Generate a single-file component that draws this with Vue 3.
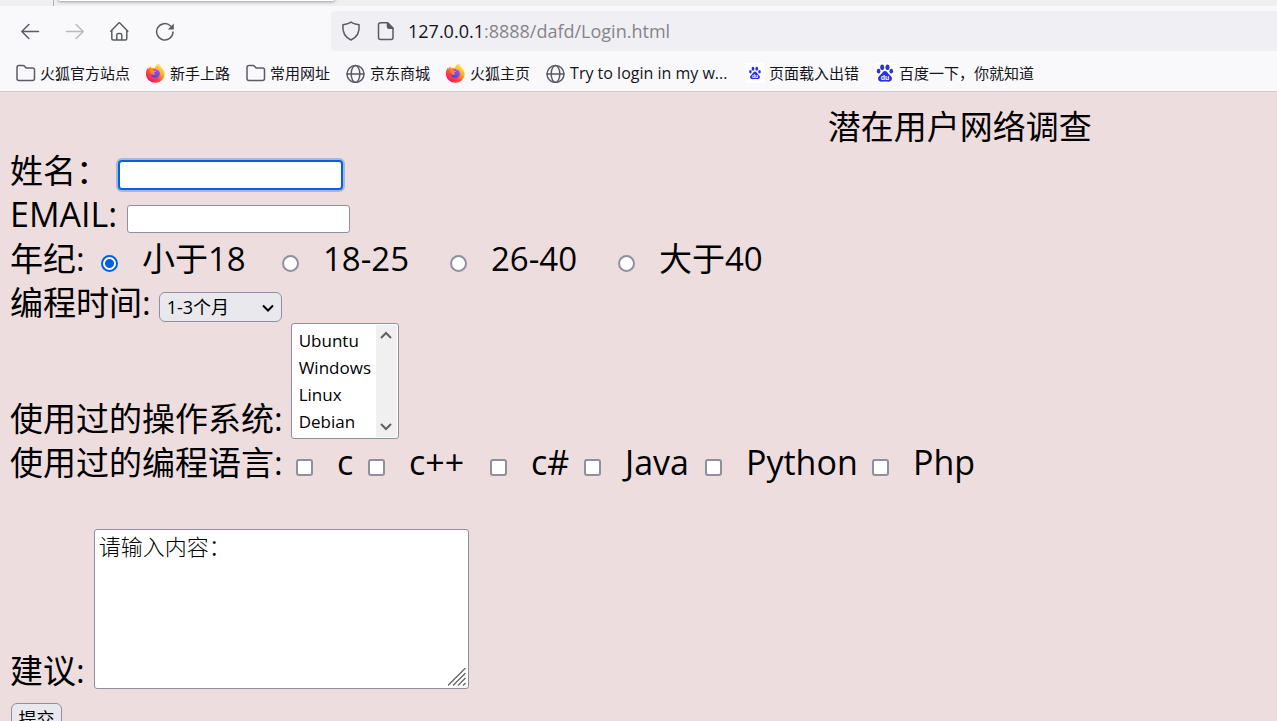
<script setup>
import { ref } from 'vue'

const bookmarks = [
  { icon: 'folder', text: '火狐官方站点' },
  { icon: 'firefox', text: '新手上路' },
  { icon: 'folder', text: '常用网址' },
  { icon: 'globe', text: '京东商城' },
  { icon: 'firefox', text: '火狐主页' },
  { icon: 'globe', text: 'Try to login in my w...', wide: true },
  { icon: 'paw-small', text: '页面载入出错' },
  { icon: 'paw', text: '百度一下，你就知道' }
]
const ages = ['小于18', '18-25', '26-40', '大于40']
const age = ref('小于18')
const languages = ['c', 'c++', 'c#', 'Java', 'Python', 'Php']
const chosen = ref([])
const systems = ['Ubuntu', 'Windows', 'Linux', 'Debian']
const suggestion = ref('请输入内容：')
</script>

<template>
  <div class="browser">
    <svg class="defs" aria-hidden="true">
      <defs>
        <linearGradient id="ffBody" x1="0.85" y1="0.1" x2="0.2" y2="0.95">
          <stop offset="0" stop-color="#fff44f" />
          <stop offset="0.35" stop-color="#ffa52a" />
          <stop offset="0.65" stop-color="#ff4a3c" />
          <stop offset="1" stop-color="#f0136f" />
        </linearGradient>
        <linearGradient id="ffCore" x1="0.7" y1="0" x2="0.3" y2="1">
          <stop offset="0" stop-color="#b14bf4" />
          <stop offset="1" stop-color="#4a46d6" />
        </linearGradient>
      </defs>
    </svg>

    <div class="tabs"><div class="tab-edge"></div><div class="tab"></div></div>

    <header class="chrome">
      <nav class="toolbar">
        <button class="nav" aria-label="后退">
          <svg viewBox="0 0 20 20"><path d="M18.500 10.500H2M8.800 3.500 1.800 10.500l7 7" /></svg>
        </button>
        <button class="nav faded" aria-label="前进">
          <svg viewBox="0 0 20 20"><path d="M1.500 10.500H18M11.200 3.500l7 7-7 7" /></svg>
        </button>
        <button class="nav" aria-label="主页">
          <svg viewBox="0 0 20 20"><path d="M.8 10.300 8.500 2.200q.8-.8 1.600 0L17.800 10.300M1.800 9.200V17.500q0 1.500 1.500 1.500h12q1.500 0 1.500-1.500V9.200M6.800 19V14q0-1.500 1.500-1.500h2q1.500 0 1.500 1.500v5" /></svg>
        </button>
        <button class="nav" aria-label="刷新">
          <svg viewBox="0 0 20 20"><path d="M15.600 5A8.200 8.200 0 1 0 18 11" /><path class="solid tip" d="M18.800 2.500v6h-6z" /></svg>
        </button>
        <div class="address">
          <svg class="glyph" viewBox="0 0 20 20"><path d="M10 1C8 2.700 5 3.300 1.900 3.700 1.300 10.500 3.500 16 10 19c6.500-3 8.700-8.500 8.100-15.300C15 3.300 12 2.700 10 1z" /></svg>
          <svg class="glyph" viewBox="0 0 20 20"><path d="M11.500 1.800H4.500q-2 0-2 2v12.700q0 2 2 2h10.500q2 0 2-2V7.300z" /><path class="solid" d="M11.500 1.800v4q0 1.500 1.500 1.500h4z" /></svg>
          <span class="url">127.0.0.1<span class="path">:8888/dafd/Login.html</span></span>
        </div>
      </nav>

      <nav class="bookmarks">
        <a v-for="b in bookmarks" :key="b.text" href="#" class="bookmark">
          <svg v-if="b.icon === 'folder'" class="icon" viewBox="0 0 20 20"><path d="M1 15.500v-11q0-2 2-2h4q1 0 1.600.8L10 5h6.500q2 0 2 2v8.500q0 2-2 2H3q-2 0-2-2z" /></svg>
          <svg v-else-if="b.icon === 'globe'" class="icon" viewBox="0 0 20 20"><circle cx="9.500" cy="11" r="8.500" /><ellipse cx="9.500" cy="11" rx="4.300" ry="8.500" /><path d="M1 11h17" /></svg>
          <svg v-else-if="b.icon === 'firefox'" class="icon colored" viewBox="0.500 0 20 20">
            <path fill="url(#ffBody)" d="M13.500.5c.7 1.400 1 2.100 2.200 3.500 2 2 3.500 4.400 3.500 7a9.400 8.800 0 0 1-18.800 0c0-2.500.6-4.800 2.200-6.500l.3 1.600L4.800 3l.5 2.200c1.300-.6 2.500-.6 3.800 0 1-2.200 2.300-3.800 4.400-4.700z" />
            <circle cx="9.800" cy="10.500" r="4.600" fill="url(#ffCore)" />
            <path fill="#ff8b24" d="M4.500 6.500c2-.5 3.400.4 4.300 1.300h2c-.2 1.200-1.800 1.300-2.300 2.300l1.200 1.300c-1.700 1-3.700.2-4.700-1.300z" />
            <path fill="#ffbd32" d="M10 3.900c3 .2 5.600 2.400 5.600 5.800-.7-1.600-1.900-2.500-3.200-2.700-1.800-.4-2.500-1.600-2.400-3.100z" />
          </svg>
          <svg v-else class="icon colored" :viewBox="b.icon === 'paw' ? '0 0 20 20' : '-4 -4 28 28'">
            <rect x="-4" y="-4" width="28" height="28" rx="1" fill="#fff" />
            <g fill="#2932e1">
              <ellipse cx="7.200" cy="4.200" rx="2" ry="2.800" /><ellipse cx="12.500" cy="4.200" rx="2" ry="2.800" />
              <ellipse cx="3.600" cy="8.200" rx="1.800" ry="2.400" /><ellipse cx="16.300" cy="8.200" rx="1.800" ry="2.400" />
              <path d="M10 8c2 0 2.700 2.200 4.200 3.600 1.500 1.300 3 2.400 2.700 4.500-.3 2-2 2.800-3.800 2.600-2-.2-4-.2-6.200 0-1.900.2-3.600-.8-3.800-2.700-.2-2 1.200-3.100 2.700-4.400C7.300 10.200 8 8 10 8z" />
            </g>
            <text x="10" y="17" text-anchor="middle" class="du">du</text>
          </svg>
          <span :class="{ wide: b.wide }">{{ b.text }}</span>
        </a>
      </nav>
    </header>

    <main class="page">
      <h1>潜在用户网络调查</h1>
      <form @submit.prevent>
        <div class="row">
          <label for="name">姓名：</label>
          <input id="name" class="text focused" type="text" />
        </div>
        <div class="row">
          <label for="email" class="latin">EMAIL:</label>
          <input id="email" class="text" type="text" />
        </div>
        <div class="row ages">
          <span>年纪:</span>
          <label v-for="a in ages" :key="a" class="choice">
            <input v-model="age" type="radio" name="age" :value="a" />{{ a }}
          </label>
        </div>
        <div class="row">
          <label for="period">编程时间:</label>
          <span class="dropdown">
            <select id="period"><option>1-3个月</option></select>
            <svg viewBox="0 0 12 8"><path d="M1 1.500l5 5 5-5" /></svg>
          </span>
        </div>
        <div class="row bottom">
          <label for="systems">使用过的操作系统:</label>
          <div class="listbox">
            <select id="systems" multiple size="4">
              <option v-for="s in systems" :key="s">{{ s }}</option>
            </select>
            <div class="track">
              <svg viewBox="0 0 12 8"><path d="M1 7l5-5 5 5" /></svg>
              <svg viewBox="0 0 12 8"><path d="M1 1l5 5 5-5" /></svg>
            </div>
          </div>
        </div>
        <div class="row languages">
          <span>使用过的编程语言:</span>
          <label v-for="l in languages" :key="l" class="choice latin">
            <input v-model="chosen" type="checkbox" :value="l" />{{ l }}
          </label>
        </div>
        <div class="row bottom spaced">
          <label for="suggestion">建议:</label>
          <div class="memo">
            <textarea id="suggestion" v-model="suggestion"></textarea>
            <svg viewBox="0 0 18 18"><path d="M0 17.500 17.500 0M5 17.500 17.500 5M10 17.500l7.500-7.500M15 17.500l2.500-2.500" /></svg>
          </div>
        </div>
        <button class="submit" type="submit">提交</button>
      </form>
    </main>
  </div>
</template>

<style>
html,
body {
  background: #eedddf;
}
</style>

<style scoped>
.browser {
  height: 100vh;
  overflow: hidden;
  display: flex;
  flex-direction: column;
  font-family: "Open Sans", "Noto Sans CJK SC", sans-serif;
  color: #000;
}
.browser * {
  box-sizing: border-box;
}
.defs {
  position: absolute;
  width: 0;
  height: 0;
}
svg {
  display: block;
  flex: none;
}
.tabs {
  display: flex;
  flex: none;
  height: 6px;
  background: #efefef;
  overflow: hidden;
}
.tab-edge {
  width: 54px;
  border-right: 1px solid #b0b0b2;
}
.tab {
  width: 275px;
  height: 1px;
  margin-left: 5px;
  background: #fff;
  border-radius: 0 0 4px 4px;
  box-shadow: 0 0 3px 1px #999;
}
.chrome {
  flex: none;
  background: #f9f9fb;
  border-bottom: 1px solid #cccccf;
  color: #15141a;
}
.toolbar {
  display: flex;
  align-items: center;
  gap: 25px;
  padding: 5px 0 0 20px;
}
.nav {
  width: 20px;
  height: 20px;
  padding: 0;
  border: 0;
  background: none;
}
.nav svg,
.glyph,
.icon {
  width: 20px;
  height: 20px;
  fill: none;
  stroke: #5b5b66;
  stroke-width: 1.5;
  stroke-linecap: round;
  stroke-linejoin: round;
}
.solid {
  fill: #5b5b66;
}
.tip {
  stroke: none;
}
.faded {
  opacity: 0.4;
}
.icon.colored {
  stroke: none;
}
.du {
  fill: #fff;
  font: bold 7px "Liberation Sans", sans-serif;
}
.address {
  flex: 1;
  display: flex;
  align-items: center;
  gap: 15px;
  height: 40px;
  margin-left: 131px;
  padding-left: 10px;
  background: #f0eff4;
  border-radius: 4px 0 0 4px;
}
.url {
  margin-left: -3px;
  font-size: 18px;
  line-height: 24px;
}
.path {
  color: #85848a;
}
.bookmarks {
  display: flex;
  gap: 16px;
  height: 40px;
  padding: 4px 0 0 16px;
  overflow: hidden;
}
.bookmark {
  display: flex;
  align-items: center;
  gap: 4px;
  color: inherit;
  text-decoration: none;
  font-size: 15px;
  line-height: 20px;
  white-space: nowrap;
}
.wide {
  width: 159px;
  font-size: 16px;
}
.page {
  padding-top: 13px;
  background: #eedddf;
  font-size: 33px;
  line-height: 44px;
}
h1 {
  margin: 0 0 0 50%;
  padding-left: 4px;
  font-size: inherit;
  font-weight: 400;
  text-align: center;
}
form {
  padding: 0 11px 0 10px;
}
.row {
  display: flex;
  align-items: center;
  gap: 8px;
  height: 44px;
  white-space: nowrap;
}
.row.bottom {
  align-items: flex-end;
  height: auto;
}
.row.spaced {
  gap: 9px;
  margin-top: 44px;
}
.latin {
  font-size: 34px;
  line-height: 42px;
}
.row > .latin {
  align-self: flex-start;
}
.text {
  width: 223px;
  height: 28px;
  margin: 8px 0 0 2px;
  padding: 0 4px;
  border: 1px solid #8f8f9d;
  border-radius: 3px;
  background: #fff;
  font: 17px "Open Sans", sans-serif;
  outline: none;
}
.focused {
  border-color: #0060df;
  box-shadow: 0 0 0 1px #0060df, 0 0 0 3px rgba(0, 96, 223, 0.3);
}
.choice {
  display: flex;
  align-items: center;
  gap: 24px;
}
.row.ages {
  display: grid;
  grid-template-columns: 91px 181px 168px 168px auto;
  justify-content: start;
  gap: 0;
}
.row.languages {
  display: grid;
  grid-template-columns: 286px 72px 122px 94px 121px 167px auto;
  justify-content: start;
  gap: 0;
}
.choice input {
  appearance: none;
  width: 17px;
  height: 17px;
  margin: 8px 0 0;
  border: 2px solid #8f8f9d;
  background: #fff;
}
.choice.latin input {
  margin-top: 10px;
}
.choice input[type="radio"] {
  border-radius: 50%;
}
.choice input[type="checkbox"] {
  border-radius: 3px;
}
.choice input[type="radio"]:checked {
  border-color: #0060df;
  background: radial-gradient(circle, #0060df 4px, #fff 5px);
}
.choice input[type="checkbox"]:checked {
  background: #0060df;
}
.dropdown {
  position: relative;
  margin-top: 8px;
}
.dropdown select {
  display: block;
  appearance: none;
  width: 123px;
  height: 30px;
  padding: 0 7px;
  border: 1px solid #8f8f9d;
  border-radius: 6px;
  background: #e9e9ed;
  color: #000;
  font: 18px "Open Sans", "Noto Sans CJK SC", sans-serif;
}
.dropdown svg {
  position: absolute;
  right: 8px;
  top: 12px;
  width: 12px;
  height: 8px;
  fill: none;
  stroke: #000;
  stroke-width: 2;
  pointer-events: none;
}
.listbox {
  display: flex;
  width: 108px;
  height: 116px;
  margin: -2px 0 2px;
  padding: 1px;
  border: 1px solid #8f8f9d;
  border-radius: 3px;
  background: #fff;
}
.listbox select {
  appearance: none;
  flex: 1;
  min-width: 0;
  height: 112px;
  margin: 0;
  padding: 4px 0 0;
  border: 0;
  background: #fff;
  color: #000;
  font: 17px "Open Sans", sans-serif;
  overflow: hidden;
  outline: none;
}
.listbox option {
  height: 27px;
  min-height: 27px;
  padding: 0 0 0 6px;
  line-height: 27px;
}
.track {
  display: flex;
  flex-direction: column;
  align-items: center;
  justify-content: space-between;
  width: 21px;
  padding: 6px 0;
  background: #f0f0f0;
}
.track svg {
  width: 12px;
  height: 8px;
  fill: none;
  stroke: #606060;
  stroke-width: 2;
}
.memo {
  position: relative;
  margin-bottom: 4px;
}
textarea {
  display: block;
  width: 375px;
  height: 160px;
  padding: 2px 4px;
  border: 1px solid #8f8f9d;
  border-radius: 3px;
  background: #fff;
  color: #000;
  font: 300 22px/26px "Noto Sans CJK SC", monospace;
  resize: none;
  outline: none;
}
.memo svg {
  position: absolute;
  right: 3px;
  bottom: 3px;
  width: 18px;
  height: 18px;
  fill: none;
  stroke: #666;
  stroke-width: 1.3;
  pointer-events: none;
}
.submit {
  display: block;
  width: 51px;
  height: 30px;
  margin: 10px 0 0 1px;
  padding: 0;
  border: 1px solid #8f8f9d;
  border-radius: 6px;
  background: #e9e9ed;
  color: #000;
  font: 18px/28px "Noto Sans CJK SC", sans-serif;
}
</style>
